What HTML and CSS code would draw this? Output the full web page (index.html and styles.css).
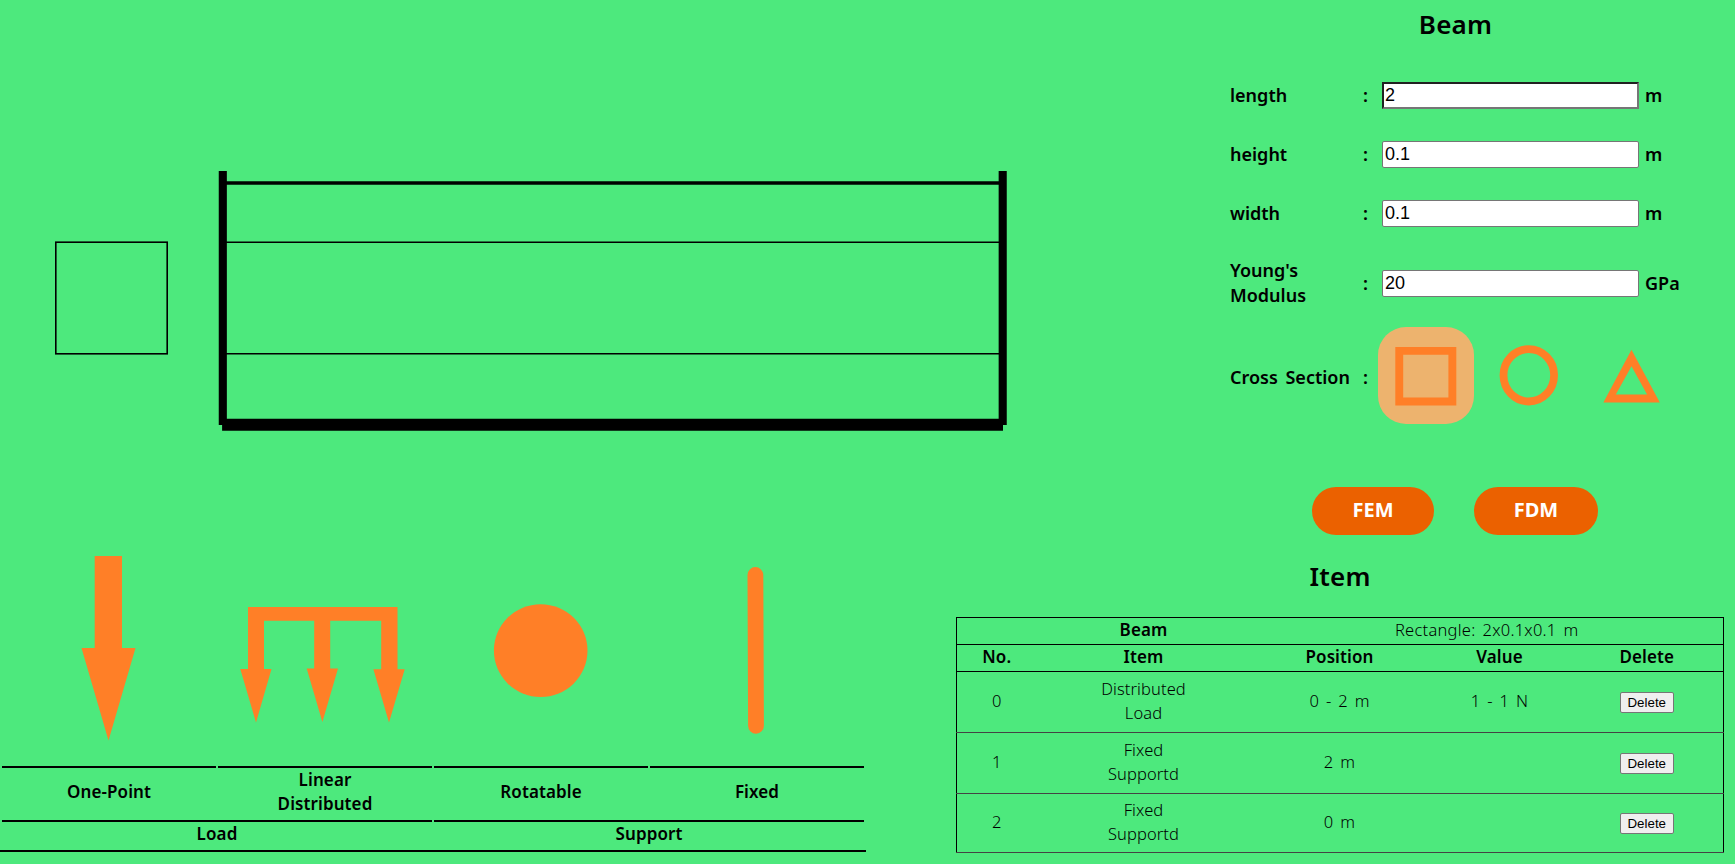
FILE: index.html
```html
<!DOCTYPE html>
<html lang="en">
<head>
<meta charset="utf-8">
<title>Beam</title>
<link rel="stylesheet" href="styles.css">
</head>
<body>
<main class="page">
  <section class="top">
    <svg class="stage" width="1200" height="540" viewBox="0 0 1200 540">
      <rect x="55.8" y="242.2" width="111.4" height="111.6" fill="none" stroke="#000" stroke-width="1.6"/>
      <path d="M222 242.2H1003M222 353.8H1003" stroke="#000" stroke-width="1.6"/>
      <path d="M222 183H1003" stroke="#000" stroke-width="3.4"/>
      <path d="M222.8 171.1V424.9M1002.7 171.1V424.9" stroke="#000" stroke-width="8.1"/>
      <path d="M222.1 424.8H1003" stroke="#000" stroke-width="12.1"/>
    </svg>
    <section class="beam">
      <h2 class="title beam-title">Beam</h2>
      <div class="field"><label>length</label><b>:</b><input class="focused" value="2"><span class="unit">m</span></div>
      <div class="field"><label>height</label><b>:</b><input value="0.1"><span class="unit">m</span></div>
      <div class="field"><label>width</label><b>:</b><input value="0.1"><span class="unit">m</span></div>
      <div class="field tall"><label>Young's<br>Modulus</label><b>:</b><input value="20"><span class="unit">GPa</span></div>
      <div class="field section-row"><label>Cross Section</label><b>:</b>
        <div class="shapes">
          <svg class="shape selected" width="96" height="97" viewBox="0 0 96 97"><path d="M17.3 20H78.3V78.4H17.3ZM25.2 27.8V70.4H70.4V27.8Z"/></svg>
          <svg class="shape" width="96" height="97" viewBox="0 0 96 97"><ellipse class="ring" cx="46.8" cy="48.3" rx="25.3" ry="26.2"/></svg>
          <svg class="shape" width="96" height="97" viewBox="0 0 96 97"><path d="M45.5 22.8L73.8 75.5H17.4ZM45.5 39.3L29.8 67.5H61.1Z"/></svg>
        </div>
      </div>
      <div class="actions"><button class="run">FEM</button><button class="run fdm">FDM</button></div>
    </section>
  </section>
  <section class="bottom">
    <div class="palette">
      <div class="tools">
        <svg class="tool" width="214" height="226" viewBox="2 540 214 226"><path d="M94.7 556H122V648H135.5L108.5 740.5L81.5 648H94.7Z"/></svg>
        <svg class="tool" width="214" height="226" viewBox="218 540 214 226"><path d="M248 607H397.5V669.3H404.7L389 722.5L373.4 669.3H381.2V620.7H330.2V668.5H338L322.4 722L306.7 668.5H314.2V620.7H264V669H271.5L256 722.5L240.3 669H248Z"/></svg>
        <svg class="tool" width="214" height="226" viewBox="434 540 214 226"><ellipse cx="540.7" cy="650.6" rx="46.8" ry="46.4"/></svg>
        <svg class="tool" width="214" height="226" viewBox="650 540 214 226"><path d="M755.4 575L756 725.8" stroke="#ff7f27" stroke-width="15.8" stroke-linecap="round"/></svg>
      </div>
      <div class="names">
        <div class="name">One-Point</div>
        <div class="name"><span>Linear</span><span>Distributed</span></div>
        <div class="name">Rotatable</div>
        <div class="name">Fixed</div>
      </div>
      <div class="groups">
        <div class="group">Load</div>
        <div class="group">Support</div>
      </div>
    </div>
    <section class="items">
      <h2 class="title item-title">Item</h2>
      <table class="list">
        <colgroup><col class="c-no"><col class="c-item"><col class="c-pos"><col class="c-val"><col class="c-del"></colgroup>
        <tr class="head"><th></th><th>Beam</th><td class="summary" colspan="3">Rectangle: 2x0.1x0.1 m</td></tr>
        <tr class="head"><th>No.</th><th>Item</th><th>Position</th><th>Value</th><th>Delete</th></tr>
        <tr class="entry"><td>0</td><td>Distributed<br>Load</td><td>0 - 2 m</td><td>1 - 1 N</td><td><button class="del">Delete</button></td></tr>
        <tr class="entry"><td>1</td><td>Fixed<br>Supportd</td><td>2 m</td><td></td><td><button class="del">Delete</button></td></tr>
        <tr class="entry last"><td>2</td><td>Fixed<br>Supportd</td><td>0 m</td><td></td><td><button class="del">Delete</button></td></tr>
      </table>
    </section>
  </section>
</main>
</body>
</html>
```
FILE: styles.css
```css
* { box-sizing: border-box; }
body {
  margin: 0;
  background: #4de97d;
  color: #000;
  font-family: "Noto Sans", "Open Sans", sans-serif;
  font-size: 16px;
  line-height: 24px;
  overflow: hidden;
}
.page { width: 1735px; height: 864px; }
.top { display: flex; height: 540px; }
.stage { display: block; flex: none; }
.beam { width: 535px; padding-left: 30px; }
.title { margin: 0; font-size: 26px; font-weight: 600; line-height: 36px; letter-spacing: .2px; text-align: center; }
.beam-title { width: 451px; padding-top: 6px; margin-bottom: 24px; }
.field {
  display: grid;
  grid-template-columns: 133px 19px 257px auto;
  align-items: center;
  height: 59px;
  font-size: 18px;
  font-weight: 600;
  line-height: 25px;
}
.field label, .field b, .unit { padding-bottom: 1px; }
.field b { font-weight: 600; }
.field input {
  width: 257px;
  height: 27px;
  margin: 0;
  padding: 1px 2px;
  border: 1px solid #767676;
  border-radius: 2px;
  background: #fff;
  font: 18px "Liberation Sans", Arial, sans-serif;
}
.field input.focused {
  padding: 1px;
  border: 2px solid #767676;
  border-top-color: #212121;
  border-left-color: #212121;
  border-radius: 0;
}
.unit { padding-left: 6px; }
.tall { height: 81px; }
.section-row { grid-template-columns: 133px 15px 1fr; height: 103px; word-spacing: 3px; }
.section-row label, .section-row b { padding: 4px 0 0; }
.shapes { display: flex; gap: 8px; }
.shape { flex: none; fill: #ff7f27; fill-rule: evenodd; }
.ring { fill: none; stroke: #ff7f27; stroke-width: 7.8; }
.selected { border-radius: 28px; background: #edb36e; }
.actions { display: flex; gap: 40px; padding: 60px 0 0 82px; }
.run {
  width: 122px;
  height: 48px;
  padding: 0 0 3px;
  border: 0;
  border-radius: 24px;
  background: #eb6100;
  color: #fff;
  font: 700 20px "Noto Sans", "Open Sans", sans-serif;
}
.fdm { width: 124px; }
.bottom { display: flex; height: 324px; }
.palette {
  width: 866px;
  height: 312px;
  border-bottom: 2px solid #000;
  font-size: 17px;
  font-weight: 600;
  letter-spacing: .1px;
}
.tools, .names, .groups { display: grid; grid-template-columns: repeat(4, 214px); gap: 2px; padding-left: 2px; }
.groups { grid-template-columns: 430px 430px; }
.tool { display: block; fill: #ff7f27; }
.name {
  display: flex;
  flex-direction: column;
  align-items: center;
  justify-content: center;
  height: 54px;
  padding-bottom: 4px;
  border-top: 2px solid #000;
}
.group { height: 30px; border-top: 2px solid #000; text-align: center; }
.items { margin-left: 90px; width: 768px; }
.item-title { padding-top: 18px; margin-bottom: 23px; }
.list {
  width: 767px;
  border-collapse: collapse;
  table-layout: fixed;
  border: 1px solid #000;
  text-align: center;
  font-size: 16.5px;
  font-weight: 350;
  letter-spacing: .1px;
  word-spacing: 2.5px;
}
.list th, .list td { padding: 0 0 2px; }
.list th { font-size: 17px; font-weight: 600; letter-spacing: .1px; }
.list .summary { letter-spacing: .25px; }
.c-no { width: 80px; }
.c-item { width: 214px; }
.c-pos { width: 178px; }
.c-val { width: 142px; }
.c-del { width: 153px; }
.head { height: 27px; border-bottom: 1px solid #000; }
.entry { height: 61px; border-bottom: 1px solid #444; }
.last { height: 59px; }
.del {
  width: 54px;
  height: 21px;
  padding: 0;
  border: 1px solid #767676;
  border-radius: 2px;
  background: #efefef;
  color: #000;
  font: 13.333px "Liberation Sans", Arial, sans-serif;
  vertical-align: middle;
}
```
